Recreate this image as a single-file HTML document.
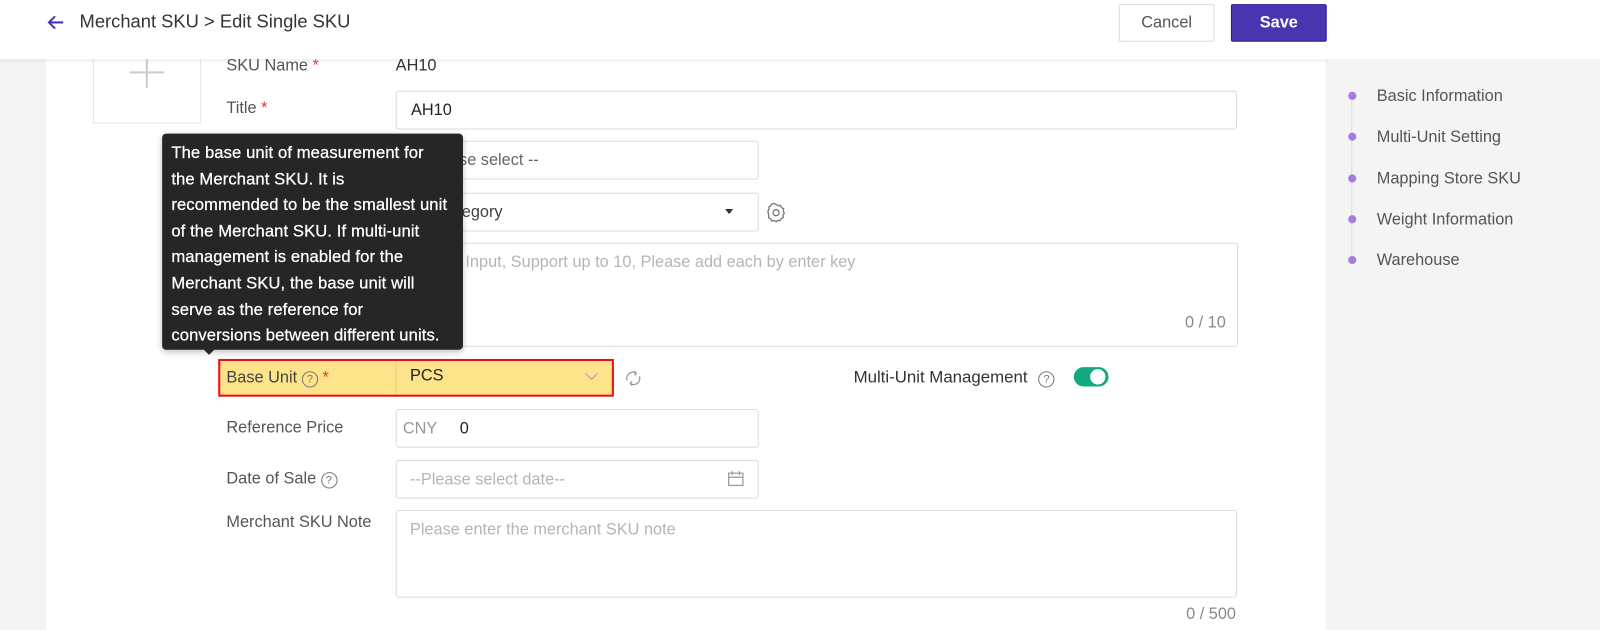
<!DOCTYPE html>
<html><head><meta charset="utf-8"><style>
html,body{margin:0;padding:0;width:1600px;height:624px;overflow:hidden;background:#f4f4f4;font-family:"Liberation Sans",Arial,sans-serif;}
#w{position:absolute;left:0;top:0;width:1569px;height:612px;transform:scale(1.0198);transform-origin:0 0;background:#f4f4f4;}
.a{position:absolute;}
.lbl{position:absolute;left:222px;font-size:16px;color:#555;white-space:nowrap;}
.req{color:#e53935;}
.inp{position:absolute;border:1px solid #dcdcdc;border-radius:3px;background:#fff;box-sizing:border-box;font-size:16px;}
.ph{color:#b5b5b5;}
.q{display:inline-block;width:14px;height:14px;border:1.3px solid #777;border-radius:50%;font-size:11px;line-height:14px;text-align:center;color:#777;vertical-align:0px;}
.nav{position:absolute;left:1350px;font-size:16px;color:#555;}
.dot{position:absolute;left:1322px;width:8px;height:8px;border-radius:50%;background:#a57be0;}
</style></head><body><div id="w">
<div class="a" style="left:45px;top:58px;width:1255px;height:560px;background:#fff"></div>
<div class="a" style="left:91px;top:40px;width:106px;height:81px;border:1px solid #e5e5e5;box-sizing:border-box"></div>
<div class="a" style="left:127px;top:70px;width:34px;height:1.5px;background:#ccc"></div>
<div class="a" style="left:143px;top:58px;width:1.5px;height:28px;background:#ccc"></div>
<div class="a" style="left:0;top:0;width:1569px;height:58px;background:#fff;box-shadow:0 2px 4px rgba(0,0,0,.08)"></div>
<svg class="a" style="left:45px;top:12px" width="20" height="20" viewBox="0 0 20 20"><path d="M17 10H3M9 4L3 10l6 6" stroke="#4a35b0" stroke-width="2" fill="none"/></svg>
<div class="a" style="left:78px;top:11px;font-size:18px;color:#333">Merchant SKU &gt; Edit Single SKU</div>
<div class="a" style="left:1097px;top:4px;width:94px;height:37px;border:1px solid #ddd;border-radius:2px;box-sizing:border-box;text-align:center;line-height:35px;font-size:16px;color:#555">Cancel</div>
<div class="a" style="left:1207px;top:4px;width:94px;height:37px;background:#4a35b0;border:1px solid #2a1a9a;border-radius:2px;box-sizing:border-box;text-align:center;line-height:35px;font-size:16px;color:#fff;font-weight:bold">Save</div>

<div class="lbl" style="top:56px">SKU Name <span class="req">*</span></div>
<div class="a" style="left:388px;top:56px;font-size:16px;color:#333">AH10</div>
<div class="lbl" style="top:98px">Title <span class="req">*</span></div>
<div class="inp" style="left:388px;top:89px;width:825px;height:38px;padding:10px 14px;color:#222">AH10</div>
<div class="lbl" style="top:149px">Link SPU <span class="q">?</span></div>
<div class="inp" style="left:388px;top:138px;width:356px;height:38px;padding:10px 14px"><span class="ph" style="color:#666">-- Please select --</span></div>
<div class="lbl" style="top:200px">Category</div>
<div class="inp" style="left:388px;top:189px;width:356px;height:38px;padding:10px 14px;color:#444">No Category</div>
<div class="a" style="left:711px;top:205px;width:0;height:0;border-left:4px solid transparent;border-right:4px solid transparent;border-top:5px solid #333"></div>
<svg class="a" style="left:751px;top:198px" width="20" height="20" viewBox="0 0 20 20"><path d="M10 2.5l2 1.2 2.3-.2 1.1 2 2 1.2-.2 2.3L18 11l-1.2 2 .2 2.3-2 1.1-1.2 2-2.3-.2-1.5 1.3-2-1.2-2.3.2-1.1-2-2-1.2.2-2.3L2 9l1.2-2-.2-2.3 2-1.1 1.2-2 2.3.2z" fill="none" stroke="#777" stroke-width="1.3"/><circle cx="10" cy="10.5" r="3" fill="none" stroke="#777" stroke-width="1.3"/></svg>
<div class="lbl" style="top:280px">GTIN <span class="q">?</span></div>
<div class="inp" style="left:388px;top:238px;width:826px;height:102px;padding:10px 14px"><span class="ph">Please Input, Support up to 10, Please add each by enter key</span></div>
<div class="a" style="left:1130px;top:308px;width:72px;text-align:right;font-size:16px;color:#888">0 / 10</div>

<div class="a" style="left:214px;top:352px;width:388px;height:37px;background:#fde38a;border:2px solid #e8101c;box-sizing:border-box"></div>
<div class="a" style="left:388px;top:354px;width:1px;height:33px;background:#e6cf7a"></div>
<div class="lbl" style="top:362px;color:#444">Base Unit <span class="q">?</span> <span class="req">*</span></div>
<div class="a" style="left:402px;top:360px;font-size:16px;color:#222">PCS</div>
<svg class="a" style="left:573px;top:364px" width="14" height="10" viewBox="0 0 14 10"><path d="M1 2l6 6 6-6" stroke="#aaa" fill="none" stroke-width="1.2"/></svg>
<svg class="a" style="left:611px;top:361px" width="20" height="20" viewBox="0 0 20 20"><path d="M4 12a6 6 0 0 1 9-7M16 8a6 6 0 0 1-9 7M11 3l2 2-2 2M9 17l-2-2 2-2" stroke="#999" fill="none" stroke-width="1.3"/></svg>
<div class="a" style="left:837px;top:361px;font-size:16.5px;color:#333">Multi-Unit Management <span class="q" style="margin-left:6px">?</span></div>
<div class="a" style="left:1053px;top:360px;width:34px;height:19px;border-radius:10px;background:#12a981"></div>
<div class="a" style="left:1069px;top:362px;width:15px;height:15px;border-radius:50%;background:#fff"></div>

<div class="lbl" style="top:411px">Reference Price</div>
<div class="inp" style="left:388px;top:401px;width:356px;height:38px;padding:10px 6px"><span style="color:#999">CNY</span><span style="margin-left:22px;color:#222">0</span></div>
<div class="lbl" style="top:461px">Date of Sale <span class="q">?</span></div>
<div class="inp" style="left:388px;top:451px;width:356px;height:38px;padding:10px 13px"><span class="ph">--Please select date--</span></div>
<svg class="a" style="left:713px;top:461px" width="17" height="17" viewBox="0 0 17 17"><rect x="1.5" y="3" width="14" height="12" fill="none" stroke="#999" stroke-width="1.2"/><path d="M1.5 7h14M5 1v4M12 1v4" stroke="#999" stroke-width="1.2"/></svg>
<div class="lbl" style="top:504px">Merchant SKU Note</div>
<div class="inp" style="left:388px;top:500px;width:825px;height:86px;padding:10px 13px"><span class="ph">Please enter the merchant SKU note</span></div>
<div class="a" style="left:1120px;top:594px;width:92px;text-align:right;font-size:16px;color:#888">0 / 500</div>

<div class="a" style="left:159px;top:131px;width:295px;height:212px;background:#262626;border-radius:4px;box-shadow:0 2px 6px rgba(0,0,0,.25)"></div>
<div class="a" style="left:199px;top:342px;width:0;height:0;border-left:6px solid transparent;border-right:6px solid transparent;border-top:6px solid #262626"></div>
<div class="a" style="left:168px;top:138px;font-size:16.3px;line-height:25.6px;color:#fff;white-space:nowrap;letter-spacing:0.1px;-webkit-text-stroke:0.25px #fff">The base unit of measurement for<br>the Merchant SKU. It is<br>recommended to be the smallest unit<br>of the Merchant SKU. If multi-unit<br>management is enabled for the<br>Merchant SKU, the base unit will<br>serve as the reference for<br>conversions between different units.</div>

<div class="a" style="left:1302px;top:58px;width:267px;height:560px;background:#f4f4f4"></div>
<div class="a" style="left:1325px;top:94px;width:1px;height:162px;background:#ddd"></div>
<div class="dot" style="top:90px"></div><div class="nav" style="top:86px">Basic Information</div>
<div class="dot" style="top:130px"></div><div class="nav" style="top:126px">Multi-Unit Setting</div>
<div class="dot" style="top:171px"></div><div class="nav" style="top:167px">Mapping Store SKU</div>
<div class="dot" style="top:211px"></div><div class="nav" style="top:207px">Weight Information</div>
<div class="dot" style="top:251px"></div><div class="nav" style="top:247px">Warehouse</div>
</div></body></html>
